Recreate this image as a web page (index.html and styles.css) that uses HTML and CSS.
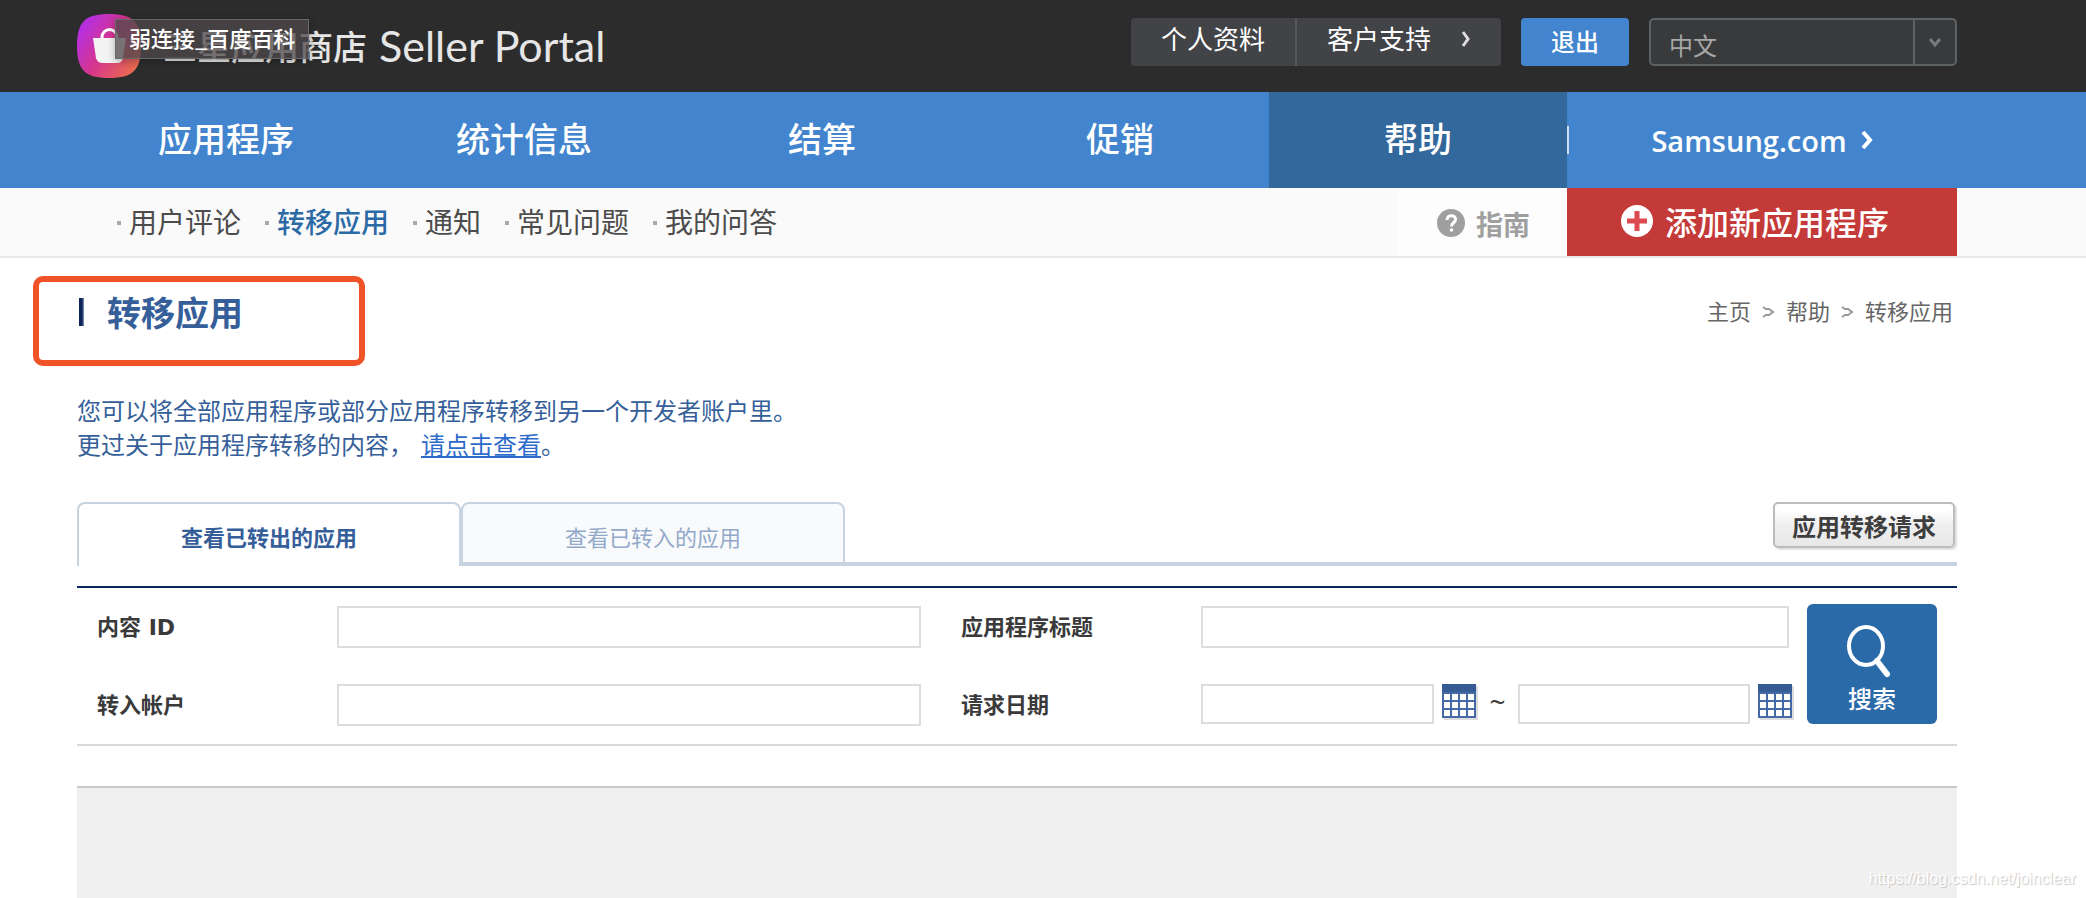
FILE: index.html
```html
<!DOCTYPE html>
<html lang="zh-CN">
<head>
<meta charset="utf-8">
<title>转移应用</title>
<link rel="stylesheet" href="styles.css">
</head>
<body>
<header class="topbar frame">
  <a class="brand" href="#">
    <svg class="brand-icon" viewBox="0 0 64 64" aria-hidden="true">
      <defs>
        <linearGradient id="brandFill" x1="0" y1="0.25" x2="0.9" y2="0.85">
          <stop offset="0" stop-color="#b32ee8"/>
          <stop offset="0.5" stop-color="#d6368c"/>
          <stop offset="1" stop-color="#ea6a50"/>
        </linearGradient>
      </defs>
      <path d="M32 0C56 0 64 8 64 32S56 64 32 64 0 56 0 32 8 0 32 0Z" fill="url(#brandFill)"/>
      <path d="M25 26v-3a7.500 7.500 0 0 1 15 0v3" fill="none" stroke="#fff" stroke-width="3"/>
      <path d="M16 24h33l-3 20q-1 5-6 5H26q-6 0-7-5Z" fill="#f4f4f4"/>
    </svg>
    <span class="brand-cn">三星应用商店</span>
    <span class="brand-en">Seller Portal</span>
  </a>
  <div class="tip" role="tooltip">弱连接_百度百科</div>
  <div class="account">
    <div class="account-links">
      <a href="#">个人资料</a>
      <a href="#">客户支持
        <svg class="chev" viewBox="0 0 10 16" aria-hidden="true"><path d="M2 1l5 7-5 7" fill="none" stroke="#ddd" stroke-width="3"/></svg>
      </a>
    </div>
    <button class="logout" type="button">退出</button>
    <div class="lang">
      <select aria-label="语言"><option>中文</option></select>
      <svg class="lang-arrow" viewBox="0 0 12 10" aria-hidden="true"><path d="M1 1l5 6 5-6" fill="none" stroke="#777b7e" stroke-width="3"/></svg>
    </div>
  </div>
</header>

<nav class="mainnav frame">
  <a href="#">应用程序</a>
  <a href="#">统计信息</a>
  <a href="#">结算</a>
  <a href="#">促销</a>
  <a class="active" href="#">帮助</a>
  <a class="samsung" href="#">Samsung.com
    <svg class="samsung-chev" viewBox="0 0 12 20" aria-hidden="true"><path d="M2 2l7 8-7 8" fill="none" stroke="#fff" stroke-width="4"/></svg>
  </a>
</nav>

<div class="subnav frame">
  <ul class="sublinks">
    <li><a href="#">用户评论</a></li>
    <li><a class="current" href="#">转移应用</a></li>
    <li><a href="#">通知</a></li>
    <li><a href="#">常见问题</a></li>
    <li><a href="#">我的问答</a></li>
  </ul>
  <a class="guide" href="#">
    <svg class="guide-icon" viewBox="0 0 28 28" aria-hidden="true">
      <circle cx="14" cy="14" r="14" fill="#9f9f9f"/>
      <path d="M10 11c0-6 9-5.500 8.500-.5 0 3-4 3.500-4 7" fill="none" stroke="#fff" stroke-width="3"/>
      <circle cx="14.500" cy="21" r="1.800" fill="#fff"/>
    </svg>
    指南
  </a>
  <a class="add" href="#">
    <svg class="add-icon" viewBox="0 0 32 32" aria-hidden="true">
      <circle cx="16" cy="16" r="16" fill="#fff"/>
      <path d="M16 6v20M6 16h20" stroke="#dc4a50" stroke-width="5"/>
    </svg>
    添加新应用程序
  </a>
</div>

<main class="content">
  <div class="heading">
    <h1>转移应用</h1>
    <nav class="crumbs" aria-label="位置">
      <a href="#">主页</a>
      <svg viewBox="0 0 11 12" aria-hidden="true"><path d="M0 1l3 2h3l4 3-4 3H3l-3 2" fill="none" stroke="#999" stroke-width="2"/></svg>
      <a href="#">帮助</a>
      <svg viewBox="0 0 11 12" aria-hidden="true"><path d="M0 1l3 2h3l4 3-4 3H3l-3 2" fill="none" stroke="#999" stroke-width="2"/></svg>
      <span>转移应用</span>
    </nav>
    <div class="highlight"></div>
  </div>

  <p class="intro">您可以将全部应用程序或部分应用程序转移到另一个开发者账户里。<br>更过关于应用程序转移的内容，<a href="#">请点击查看</a>。</p>

  <div class="tabs">
    <button class="tab selected" type="button">查看已转出的应用</button>
    <button class="tab" type="button">查看已转入的应用</button>
    <div class="tabs-rest"><button class="request" type="button">应用转移请求</button></div>
  </div>

  <form class="search">
    <label class="label-a" for="cid">内容 ID</label>
    <input class="field-a" id="cid" type="text">
    <label class="label-b" for="apptitle">应用程序标题</label>
    <input class="field-b title-field" id="apptitle" type="text">
    <label class="label-a" for="acct">转入帐户</label>
    <input class="field-a" id="acct" type="text">
    <label class="label-b" for="from">请求日期</label>
    <div class="dates field-b">
      <input id="from" type="text">
      <button class="cal" type="button" aria-label="开始日期">
        <svg viewBox="0 0 36 36" aria-hidden="true"><path d="M2 2h34v34H2z" fill="#ddd"/><path d="M0 0h34v34H0z" fill="#466aa4"/><path d="M0 0h34v8H0z" fill="#365c96"/><path d="M2 10h6v6H2zM10 10h6v6h-6zM18 10h6v6h-6zM26 10h6v6h-6zM2 18h6v6H2zM10 18h6v6h-6zM18 18h6v6h-6zM26 18h6v6h-6zM2 26h6v6H2zM10 26h6v6h-6zM18 26h6v6h-6zM26 26h6v6h-6z" fill="#fff"/></svg>
      </button>
      <span class="tilde">~</span>
      <input type="text" aria-label="结束日期">
      <button class="cal" type="button" aria-label="选择结束日期">
        <svg viewBox="0 0 36 36" aria-hidden="true"><path d="M2 2h34v34H2z" fill="#ddd"/><path d="M0 0h34v34H0z" fill="#466aa4"/><path d="M0 0h34v8H0z" fill="#365c96"/><path d="M2 10h6v6H2zM10 10h6v6h-6zM18 10h6v6h-6zM26 10h6v6h-6zM2 18h6v6H2zM10 18h6v6h-6zM18 18h6v6h-6zM26 18h6v6h-6zM2 26h6v6H2zM10 26h6v6h-6zM18 26h6v6h-6zM26 26h6v6h-6z" fill="#fff"/></svg>
      </button>
    </div>
    <button class="go" type="submit">
      <svg viewBox="0 0 44 50" aria-hidden="true"><ellipse cx="16" cy="20" rx="17" ry="19" fill="none" stroke="#fff" stroke-width="4"/><path d="M27 35l10 13" stroke="#fff" stroke-width="6" stroke-linecap="round"/></svg>
      搜索
    </button>
  </form>

  <section class="results" aria-label="结果"></section>
</main>
<div class="watermark">https://blog.csdn.net/joinclear</div>
</body>
</html>
```

FILE: styles.css
```css
* { box-sizing: border-box; }

body {
  margin: 0;
  min-height: 100vh;
  display: flex;
  flex-direction: column;
  background: #fff;
  color: #3a3a3a;
  font-family: "Noto Sans CJK SC", sans-serif;
  font-size: 22px;
}

a { color: inherit; text-decoration: none; }
button, input, select { font: inherit; }
button { cursor: pointer; }
svg { display: block; flex: none; overflow: visible; }

.frame { padding-left: 77px; padding-right: 129px; }

/* top bar */
.topbar {
  position: relative;
  display: flex;
  justify-content: space-between;
  height: 92px;
  background: #2c2c2c;
}
.brand { display: flex; align-items: center; color: #e6e6e6; white-space: nowrap; }
.brand-icon { width: 64px; height: 64px; margin-right: 22px; }
.brand-cn { font-size: 34px; font-weight: 500; line-height: 48px; }
.brand-en { margin-left: 12px; font-family: Lato, sans-serif; font-size: 43px; line-height: 48px; }
.tip {
  position: absolute;
  left: 115px;
  top: 19px;
  padding: 0 13px 4px;
  border: 1px solid #6a686a;
  background: rgba(78, 72, 75, 0.76);
  box-shadow: 0 2px 8px rgba(0, 0, 0, 0.3);
  color: #fff;
  font-size: 22px;
  font-weight: 500;
  line-height: 34px;
}
.account { display: flex; align-items: flex-start; gap: 20px; padding-top: 18px; }
.account-links {
  display: flex;
  height: 48px;
  border-radius: 4px;
  background: #424347;
  color: #fff;
  font-size: 26px;
  line-height: 40px;
}
.account-links a { display: flex; align-items: flex-start; padding: 0 30px; }
.account-links a + a { border-left: 2px solid #56585c; }
.chev { width: 10px; height: 16px; margin: 13px 0 0 30px; }
.logout {
  width: 108px;
  height: 48px;
  padding: 0 0 4px;
  border: 0;
  border-radius: 4px;
  background: #4285ce;
  color: #fff;
  font-size: 24px;
  font-weight: 500;
}
.lang { position: relative; width: 308px; }
.lang select {
  appearance: none;
  display: block;
  width: 100%;
  height: 48px;
  padding: 4px 48px 0 18px;
  border: 2px solid #5d6265;
  border-radius: 5px;
  background: linear-gradient(#5d6265, #5d6265) right 40px top / 2px 100% no-repeat #393a3c;
  color: #a8a8a8;
  font-size: 24px;
}
.lang-arrow { position: absolute; right: 16px; top: 20px; width: 12px; height: 10px; }

/* main navigation */
.mainnav { display: flex; height: 96px; background: #4285ce; color: #fff; font-size: 34px; font-weight: 500; }
.mainnav a {
  flex: 298;
  display: flex;
  align-items: center;
  justify-content: center;
  padding-bottom: 6px;
}
.mainnav .active { background: #33689c; }
.mainnav .samsung {
  flex: 390;
  gap: 14px;
  background: linear-gradient(#cfe0f4, #cfe0f4) left center / 2px 28px no-repeat;
  padding-bottom: 0;
  font-family: "Open Sans", sans-serif;
  font-size: 29px;
  font-weight: 600;
}
.samsung-chev { width: 12px; height: 20px; }

/* secondary navigation */
.subnav { display: flex; height: 70px; border-bottom: 2px solid #e9e9e9; background: #fafafa; }
.sublinks {
  flex: 1;
  display: flex;
  align-items: center;
  gap: 24px;
  margin: 0;
  padding: 0 0 2px 40px;
  list-style: none;
  color: #4c4c4c;
  font-size: 28px;
}
.sublinks li { display: flex; align-items: center; gap: 8px; white-space: nowrap; }
.sublinks li::before { content: ""; width: 4px; height: 4px; margin-top: 4px; background: #aaa; }
.sublinks .current { color: #2c6aa6; font-weight: 500; }
.guide {
  display: flex;
  align-items: center;
  gap: 11px;
  padding: 2px 37px 0 39px;
  background: #fdfdfd;
  color: #9f9f9f;
  font-size: 27px;
  font-weight: 700;
}
.guide-icon { width: 28px; height: 28px; }
.add {
  width: 390px;
  display: flex;
  align-items: center;
  gap: 12px;
  padding: 0 0 2px 54px;
  background: #c43a38;
  color: #fff;
  font-size: 32px;
  font-weight: 500;
  white-space: nowrap;
}
.add-icon { width: 32px; height: 32px; }

/* page content */
.content { flex: 1; display: flex; flex-direction: column; margin: 0 129px 0 77px; }
.heading {
  position: relative;
  display: flex;
  align-items: center;
  justify-content: space-between;
  height: 108px;
}
h1 {
  display: flex;
  align-items: center;
  gap: 23px;
  margin: 0;
  padding-left: 2px;
  color: #365f9a;
  font-size: 34px;
  line-height: 48px;
}
h1::before { content: ""; width: 5px; height: 28px; background: linear-gradient(90deg, #0a2558 60%, #8fa0bb); }
.highlight {
  position: absolute;
  left: -44px;
  top: 18px;
  width: 332px;
  height: 90px;
  border: 6px solid #f05328;
  border-radius: 10px;
}
.crumbs { display: flex; align-items: center; gap: 12px; padding: 0 4px 4px 0; color: #666; }
.crumbs svg { width: 11px; height: 12px; margin-top: 4px; }
.intro { margin: 27px 0 0; color: #365f9a; font-size: 24px; line-height: 34px; }
.intro a { margin-left: 8px; color: #2d6bcb; text-decoration: underline; }

.tabs { display: flex; height: 64px; margin-top: 41px; }
.tab {
  width: 384px;
  padding: 6px 0 0;
  border: 2px solid #c7d3e1;
  border-bottom: 4px solid #c7d3e1;
  border-radius: 8px 8px 0 0;
  background: #f8fafc;
  color: #93a9c9;
  font-size: 22px;
}
.tab.selected { padding-bottom: 4px; border-bottom: 0; background: #fff; color: #365f9a; font-weight: 700; }
.tabs-rest { flex: 1; display: flex; justify-content: flex-end; align-items: flex-start; border-bottom: 4px solid #c7d3e1; }
.request {
  width: 182px;
  height: 46px;
  margin-right: 2px;
  padding: 2px 0 0;
  border: 2px solid #bcbcbc;
  border-radius: 5px;
  background: linear-gradient(#fff 15%, #efefef 50%, #e8e8e8);
  box-shadow: 2px 2px 1px #e0e0e0;
  color: #3e3e3e;
  font-size: 24px;
  font-weight: 700;
  line-height: 34px;
}

.search {
  display: grid;
  grid-template-columns: 240px minmax(0, 584fr) 40px 240px minmax(0, 591fr) 15px 130px;
  row-gap: 34px;
  margin-top: 20px;
  padding: 16px 20px 18px;
  border-top: 2px solid #0a2558;
  border-bottom: 2px solid #d9d9d9;
}
.search label {
  height: 42px;
  margin-top: 2px;
  color: #3a3a3a;
  font-family: "DejaVu Sans", "Noto Sans CJK SC", sans-serif;
  font-weight: 700;
  line-height: 44px;
}
.label-a { grid-column: 1; }
.field-a { grid-column: 2; }
.label-b { grid-column: 4; }
.field-b { grid-column: 5; }
.search input { min-width: 0; height: 42px; margin-top: 2px; padding: 0 8px; border: 2px solid #ddd; background: #fff; }
.search .title-field { margin-right: 3px; }
.dates { display: flex; align-items: flex-start; }
.search .dates input { flex: 1; height: 40px; }
.cal { margin: 2px 0 0 8px; padding: 0; border: 0; background: none; }
.cal svg { width: 36px; height: 36px; }
.cal:last-child { width: 34px; }
.tilde { width: 40px; text-align: center; line-height: 38px; font-size: 28px; font-family: "Noto Sans", sans-serif; }
.go {
  grid-column: 7;
  grid-row: 1 / 3;
  align-self: start;
  display: flex;
  flex-direction: column;
  align-items: center;
  gap: 4px;
  height: 120px;
  padding: 22px 0 0;
  border: 0;
  border-radius: 6px;
  background: #2b6aa8;
  color: #fff;
  font-size: 24px;
  font-weight: 500;
  line-height: 36px;
}
.go svg { width: 44px; height: 50px; }

.results { flex: 1; min-height: 112px; margin-top: 40px; border-top: 2px solid #c9c9c9; background: #f0f0f0; }

.watermark {
  position: absolute;
  right: 10px;
  bottom: 9px;
  color: #fff;
  font-family: "Liberation Sans", sans-serif;
  font-size: 16px;
  line-height: 20px;
  text-shadow: 1px 1px 1px #c4c4c4;
}
```
